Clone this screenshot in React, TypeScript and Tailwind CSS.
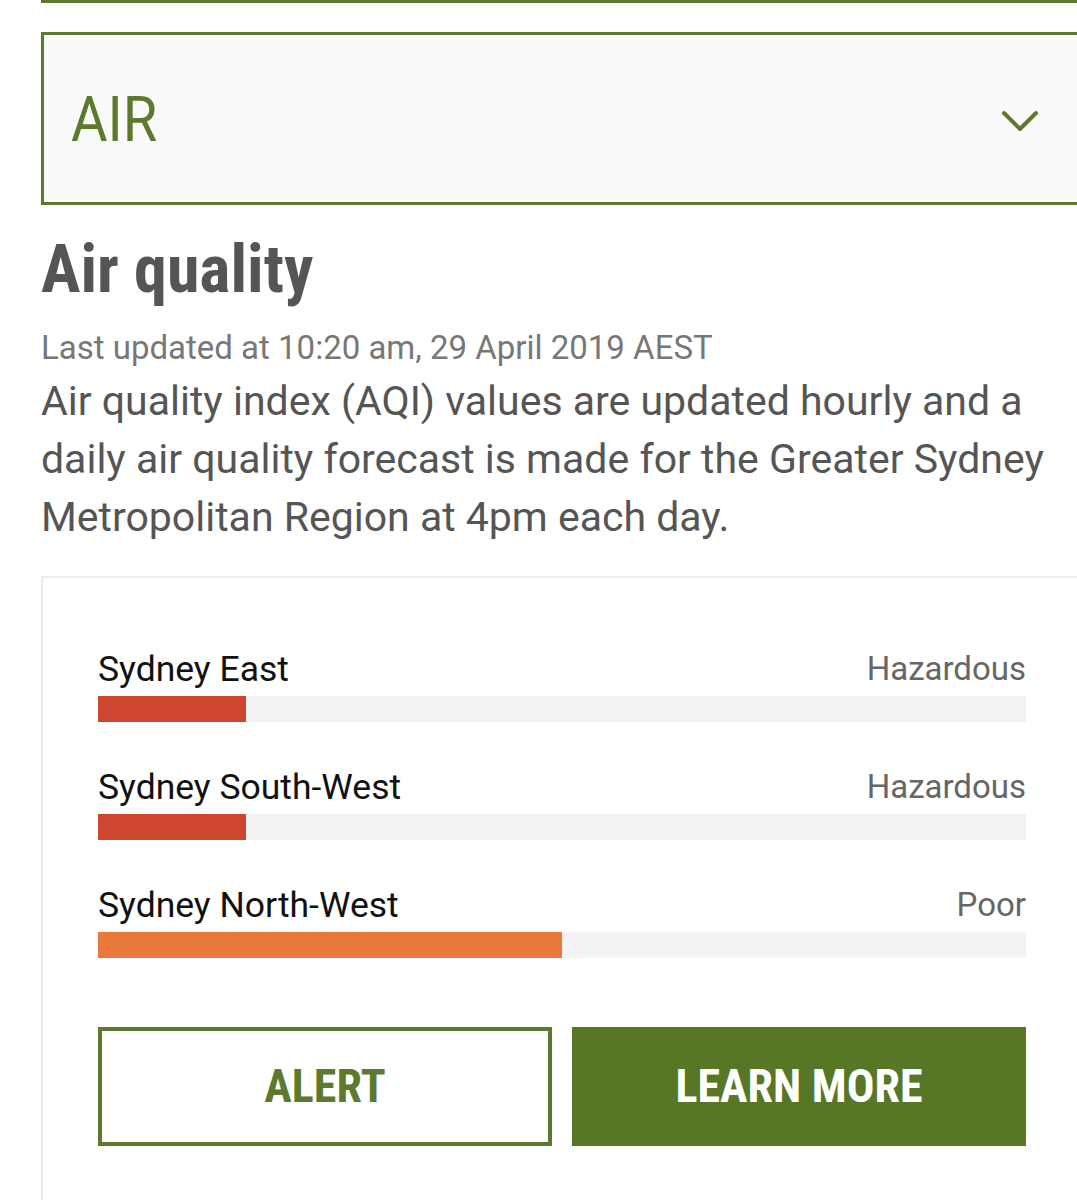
import React from "react";

function Row({ name, level, width, color }: { name: string; level: string; width: number; color: string }) {
  return (
    <div className="flex flex-col">
      <div className="flex items-end justify-between h-[44px]">
        <span className="text-[35.5px] leading-[44px] text-[#111]">{name}</span>
        <span className="text-[33px] leading-[44px] text-[#666]">{level}</span>
      </div>
      <div className="mt-[5px] h-[26px] bg-[#f3f3f3]">
        <div className="h-full" style={{ width: `${width}px`, backgroundColor: color }} />
      </div>
    </div>
  );
}

export default function App() {
  return (
    <div className="w-[1077px] h-[1200px] overflow-hidden bg-white" style={{ fontFamily: "Roboto, 'Noto Sans', sans-serif" }}>
      <div className="ml-[41px] w-[1042px]">
        <div className="h-[3px] bg-[#5b7a2e]" />
        <div className="mt-[29px] h-[173px] border-[3px] border-[#5b7a2e] bg-[#fafafa] flex items-center justify-between pl-[27px] pr-[41px]">
          <span className="inline-block origin-left scale-x-[0.89] text-[63px] leading-none text-[#5b7a2e] mt-[2px]">AIR</span>
          <svg width="38" height="22" viewBox="0 0 38 22" className="mt-[4px]">
            <path d="M3 3 L19 19 L35 3" fill="none" stroke="#5b7a2e" strokeWidth="4" strokeLinecap="round" strokeLinejoin="round" />
          </svg>
        </div>
        <h1 className="mt-[27px] text-[66px] leading-[76px] font-bold text-[#555] font-stretch-condensed">Air quality</h1>
        <p className="mt-[20px] text-[33px] leading-[40px] text-[#777]">Last updated at 10:20 am, 29 April 2019 AEST</p>
        <p className="mt-[4px] text-[41px] leading-[58px] text-[#555]">
          Air quality index (AQI) values are updated hourly and a daily air quality forecast is made for the Greater Sydney Metropolitan Region at 4pm each day.
        </p>
        <div className="mt-[30px] border-[2px] border-[#ececec] pl-[55px] pr-[55px] pt-[69px] pb-[60px] flex flex-col">
          <div className="flex flex-col gap-[43px]">
            <Row name="Sydney East" level="Hazardous" width={148} color="#cc4630" />
            <Row name="Sydney South-West" level="Hazardous" width={148} color="#cc4630" />
            <Row name="Sydney North-West" level="Poor" width={464} color="#e8793b" />
          </div>
          <div className="mt-[69px] grid grid-cols-2 gap-[20px]">
            <div className="h-[119px] border-[4px] border-[#5b7a2e] bg-white flex items-center justify-center">
              <span className="text-[46px] font-bold text-[#5b7a2e] font-stretch-condensed">ALERT</span>
            </div>
            <div className="h-[119px] bg-[#587726] flex items-center justify-center">
              <span className="text-[46px] font-bold text-white font-stretch-condensed">LEARN MORE</span>
            </div>
          </div>
        </div>
      </div>
    </div>
  );
}
